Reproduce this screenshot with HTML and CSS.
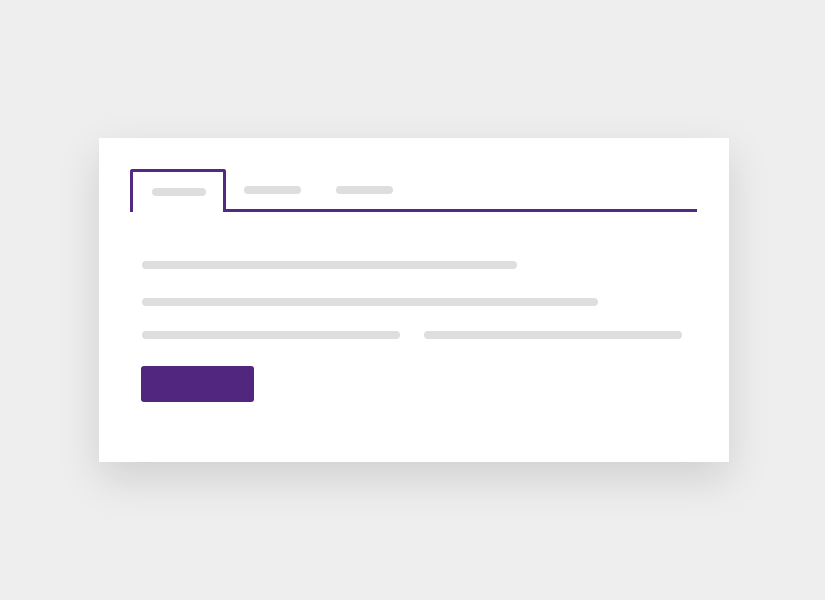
FILE: index.html
```html
<!DOCTYPE html>
<html lang="en">
<head>
<meta charset="utf-8">
<title>Tabs skeleton</title>
<link rel="stylesheet" href="styles.css">
</head>
<body>
<div class="card">
  <div class="tabs">
    <div class="tab tab-active"><span class="pill pill-tab-active"></span></div>
    <div class="tab"><span class="pill pill-tab"></span></div>
    <div class="tab"><span class="pill pill-tab"></span></div>
    <div class="tab-fill"></div>
  </div>
  <div class="panel">
    <div class="line line-1"></div>
    <div class="line line-2"></div>
    <div class="line-row">
      <div class="line line-3"></div>
      <div class="line line-3"></div>
    </div>
    <div class="button"></div>
  </div>
</div>
</body>
</html>
```
FILE: styles.css
```css
html, body {
  margin: 0;
  padding: 0;
}
body {
  background: #eeeeee;
  font-family: "Liberation Sans", Arial, sans-serif;
  width: 825px;
  height: 600px;
  overflow: hidden;
}
.card {
  box-sizing: border-box;
  margin: 138px 0 0 99px;
  width: 630px;
  height: 324px;
  background: #ffffff;
  box-shadow: 0 16px 40px rgba(0, 0, 0, 0.13);
  padding: 31px 32px 0 31px;
}
.tabs {
  display: flex;
  align-items: stretch;
  height: 43px;
}
.tab {
  box-sizing: border-box;
  display: flex;
  align-items: flex-start;
  padding: 17px 17px 0 18px;
  border-bottom: 3px solid #522a84;
}
.tab-active {
  border: 3px solid #522a84;
  border-bottom: none;
  border-radius: 3px 3px 0 0;
  padding: 16px 17px 0 19px;
}
.tab-fill {
  flex: 1;
  border-bottom: 3px solid #522a84;
}
.pill {
  display: block;
  height: 8px;
  border-radius: 4px;
  background: #dedede;
}
.pill-tab-active {
  width: 54px;
}
.pill-tab {
  width: 57px;
}
.panel {
  padding: 49px 0 0 11px;
  display: flex;
  flex-direction: column;
  align-items: flex-start;
}
.line {
  height: 8px;
  border-radius: 4px;
  background: #dedede;
}
.line-1 {
  width: 375px;
  margin-left: 1px;
}
.line-2 {
  width: 456px;
  margin-top: 29px;
  margin-left: 1px;
}
.line-row {
  display: flex;
  gap: 24px;
  margin-top: 25px;
  margin-left: 1px;
}
.line-3 {
  width: 258px;
}
.button {
  width: 113px;
  height: 36px;
  margin-top: 27px;
  border-radius: 3px;
  background: #51267f;
}
```
